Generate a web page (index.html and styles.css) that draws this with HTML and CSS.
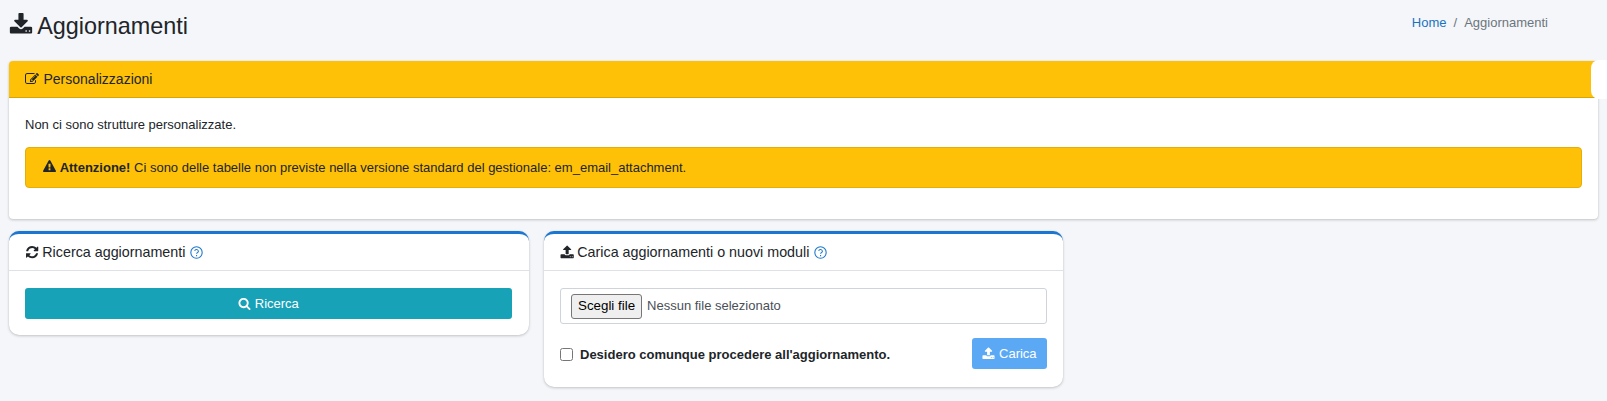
FILE: index.html
```html
<!DOCTYPE html>
<html lang="it">
  <head>
    <meta charset="UTF-8" />
    <meta name="viewport" content="width=device-width, initial-scale=1.0" />
    <title>Aggiornamenti</title>
    <link rel="stylesheet" href="styles.css">
  </head>

  <body>
    <header class="page-head">
      <h1 class="page-title">
        <svg class="icon title-icon" viewBox="0 0 1792 1792"><path d="M1344 1344q0-26-19-45t-45-19-45 19-19 45 19 45 45 19 45-19 19-45zm256 0q0-26-19-45t-45-19-45 19-19 45 19 45 45 19 45-19 19-45zm128-224v320q0 40-28 68t-68 28h-1472q-40 0-68-28t-28-68v-320q0-40 28-68t68-28h465l135 136q58 56 136 56t136-56l136-136h464q40 0 68 28t28 68zm-325-569q17 41-14 70l-448 448q-18 19-45 19t-45-19l-448-448q-31-29-14-70 17-39 59-39h256v-448q0-26 19-45t45-19h256q26 0 45 19t19 45v448h256q42 0 59 39z"/></svg>
        Aggiornamenti
      </h1>
      <nav class="breadcrumb">
        <a href="#">Home</a>
        <span class="crumb-sep">/</span>
        <span>Aggiornamenti</span>
      </nav>
    </header>

    <section class="card card-warning">
      <div class="card-title warning-title">
        <svg class="icon" viewBox="0 0 1792 1792"><path d="M888 1184l116-116-152-152-116 116v56h96v96h56zm440-720q-16-16-33 1l-350 350q-17 17-1 33t33-1l350-350q17-17 1-33zm80 594v190q0 119-84.5 203.5t-203.5 84.5h-832q-119 0-203.5-84.5t-84.5-203.5v-832q0-119 84.5-203.5t203.5-84.5h832q63 0 117 25 15 7 18 23 3 17-9 29l-49 49q-14 14-32 8-23-6-45-6h-832q-66 0-113 47t-47 113v832q0 66 47 113t113 47h832q66 0 113-47t47-113v-126q0-13 9-22l64-64q15-15 35-7t20 29zm-96-738l288 288-672 672h-288v-288zm444 132l-92 92-288-288 92-92q28-28 68-28t68 28l152 152q28 28 28 68t-28 68z"/></svg>
        Personalizzazioni
      </div>
      <div class="card-body">
        <p class="plain-text">Non ci sono strutture personalizzate.</p>
        <div class="alert">
          <svg class="icon" viewBox="0 0 1792 1792"><path d="M1024 1375v-190q0-14-9.5-23.5t-22.5-9.5h-192q-13 0-22.5 9.5t-9.5 23.5v190q0 14 9.5 23.5t22.5 9.5h192q13 0 22.5-9.5t9.5-23.5zm-2-374l18-459q0-12-10-19-13-11-24-11h-220q-11 0-24 11-10 7-10 21l17 457q0 10 10 16.5t24 6.5h185q14 0 23.5-6.5t10.5-16.5zm-14-934l768 1408q35 63-2 126-17 29-46.5 46t-63.5 17h-1536q-34 0-63.5-17t-46.5-46q-37-63-2-126l768-1408q17-31 47-49t65-18 65 18 47 49z"/></svg>
          <b>Attenzione!</b> Ci sono delle tabelle non previste nella versione standard del gestionale: em_email_attachment.
        </div>
      </div>
    </section>
    <div class="side-tab"></div>

    <div class="card-row">
      <section class="card card-primary">
        <div class="card-title">
          <svg class="icon" viewBox="0 0 1792 1792"><path d="M1639 1056q0 5-1 7-64 268-268 434.5t-478 166.5q-146 0-282.5-55t-243.5-157l-129 129q-19 19-45 19t-45-19-19-45v-448q0-26 19-45t45-19h448q26 0 45 19t19 45-19 45l-137 137q71 66 161 102t187 36q134 0 250-65t186-179q11-17 53-117 8-23 30-23h192q13 0 22.5 9.5t9.5 22.5zm25-800v448q0 26-19 45t-45 19h-448q-26 0-45-19t-19-45 19-45l138-138q-148-137-349-137-134 0-250 65t-186 179q-11 17-53 117-8 23-30 23h-199q-13 0-22.5-9.5t-9.5-22.5v-7q65-268 270-434.5t480-166.5q146 0 284 55.5t245 156.5l130-129q19-19 45-19t45 19 19 45z"/></svg>
          Ricerca aggiornamenti
          <svg class="help" viewBox="0 0 24 24"><circle cx="12" cy="12" r="10.5"/><path d="M8.6 9.2a3.5 3.5 0 0 1 6.9.5c0 2.3-3.4 2.6-3.4 4.8"/><path d="M12.1 16.6v2.1"/></svg>
        </div>
        <div class="card-body">
          <button class="btn btn-search" type="button">
            <svg class="icon" viewBox="0 0 1792 1792"><path d="M1216 832q0-185-131.5-316.5t-316.5-131.5-316.5 131.5-131.5 316.5 131.5 316.5 316.5 131.5 316.5-131.5 131.5-316.5zm512 832q0 52-38 90t-90 38q-54 0-90-38l-343-342q-179 124-399 124-143 0-273.5-55.5t-225-150-150-225-55.5-273.5 55.5-273.5 150-225 225-150 273.5-55.5 273.5 55.5 225 150 150 225 55.5 273.5q0 220-124 399l343 343q37 37 37 90z"/></svg>
            Ricerca
          </button>
        </div>
      </section>

      <section class="card card-primary">
        <div class="card-title">
          <svg class="icon" viewBox="0 0 1792 1792"><path d="M1344 1472q0-26-19-45t-45-19-45 19-19 45 19 45 45 19 45-19 19-45zm256 0q0-26-19-45t-45-19-45 19-19 45 19 45 45 19 45-19 19-45zm128-224v320q0 40-28 68t-68 28h-1472q-40 0-68-28t-28-68v-320q0-40 28-68t68-28h427q21 56 70.5 92t110.5 36h256q61 0 110.5-36t70.5-92h427q40 0 68 28t28 68zm-325-648q-17 40-59 40h-256v448q0 26-19 45t-45 19h-256q-26 0-45-19t-19-45v-448h-256q-42 0-59-40-17-39 14-69l448-448q18-19 45-19t45 19l448 448q31 30 14 69z"/></svg>
          Carica aggiornamenti o nuovi moduli
          <svg class="help" viewBox="0 0 24 24"><circle cx="12" cy="12" r="10.5"/><path d="M8.6 9.2a3.5 3.5 0 0 1 6.9.5c0 2.3-3.4 2.6-3.4 4.8"/><path d="M12.1 16.6v2.1"/></svg>
        </div>
        <div class="card-body upload-body">
          <div class="file-box">
            <span class="file-btn">Scegli file</span>
            <span class="file-name">Nessun file selezionato</span>
          </div>
          <div class="upload-row">
            <label class="check-label"><input type="checkbox" /> Desidero comunque procedere all'aggiornamento.</label>
            <button class="btn btn-upload" type="button">
              <svg class="icon" viewBox="0 0 1792 1792"><path d="M1344 1472q0-26-19-45t-45-19-45 19-19 45 19 45 45 19 45-19 19-45zm256 0q0-26-19-45t-45-19-45 19-19 45 19 45 45 19 45-19 19-45zm128-224v320q0 40-28 68t-68 28h-1472q-40 0-68-28t-28-68v-320q0-40 28-68t68-28h427q21 56 70.5 92t110.5 36h256q61 0 110.5-36t70.5-92h427q40 0 68 28t28 68zm-325-648q-17 40-59 40h-256v448q0 26-19 45t-45 19h-256q-26 0-45-19t-19-45v-448h-256q-42 0-59-40-17-39 14-69l448-448q18-19 45-19t45 19l448 448q31 30 14 69z"/></svg>
              Carica
            </button>
          </div>
        </div>
      </section>
    </div>
  </body>
</html>
```

FILE: styles.css
```css
html,
body {
  height: 100%;
}

body {
  margin: 0;
  padding: 0 9px;
  background-color: #f4f6f9;
  color: #212529;
  font-family: "Liberation Sans", Arial, sans-serif;
  font-size: 13px;
  line-height: 20px;
  overflow: hidden;
  box-sizing: border-box;
}

.icon {
  width: 1em;
  height: 1em;
  fill: currentColor;
  vertical-align: -0.12em;
}

.page-head {
  height: 61px;
  display: flex;
  justify-content: space-between;
  align-items: center;
  padding-bottom: 9px;
  box-sizing: border-box;
}

.page-title {
  margin: 0;
  font-size: 23.4px;
  font-weight: 400;
  line-height: 30px;
  word-spacing: -1px;
}

.title-icon {
  width: 24px;
  height: 24px;
  vertical-align: -3px;
}

.breadcrumb {
  display: flex;
  gap: 7px;
  margin-right: 50px;
  margin-bottom: 6px;
  color: #6c757d;
  font-size: 13px;
}

.breadcrumb a {
  color: #1a73c0;
  text-decoration: none;
}

.card {
  background-color: #fff;
  border-radius: 4px;
  box-shadow: 0 0 1px rgba(0, 0, 0, 0.13), 0 1px 3px rgba(0, 0, 0, 0.2);
}

.card-warning {
  height: 158px;
}

.card-primary {
  border-top: 3px solid #1b76d2;
  border-radius: 10px;
}

.card-title {
  height: 36px;
  padding: 0 16px;
  display: flex;
  align-items: center;
  gap: 3px;
  border-bottom: 1px solid #dee2e6;
  font-size: 14.3px;
}

.warning-title {
  gap: 4.5px;
  background-color: #ffc107;
  border-bottom: 1px solid #d9a406;
  border-radius: 4px 4px 0 0;
  font-size: 14px;
}

.card-body {
  padding: 17px 17px 16px 16px;
}

.upload-body {
  padding-right: 16px;
}

.plain-text {
  margin: 0 0 12px;
}

.alert {
  padding: 9.5px 17px;
  margin-right: -1px;
  background-color: #ffc107;
  border: 1px solid #e6ad06;
  border-radius: 4px;
}

.side-tab {
  position: absolute;
  top: 60px;
  right: 0;
  width: 16px;
  height: 39px;
  background-color: #fff;
  border-radius: 8px 0 0 8px;
}

.card-row {
  display: grid;
  grid-template-columns: 520px 519px;
  gap: 15px;
  align-items: start;
  margin-top: 12px;
}

.help {
  width: 13px;
  height: 13px;
  margin-left: 2px;
  fill: none;
  stroke: #1f7ac9;
  stroke-width: 2;
}

.btn {
  height: 31px;
  border: 0;
  border-radius: 3px;
  color: #fff;
  font-family: inherit;
  font-size: 13px;
}

.btn-search {
  display: block;
  width: 100%;
  background-color: #17a2b8;
}

.btn-upload {
  width: 75px;
  background-color: #5ba9f5;
}

.file-box {
  height: 36px;
  padding: 0 10px;
  display: flex;
  align-items: center;
  gap: 5px;
  border: 1px solid #ced4da;
  border-radius: 3px;
  box-sizing: border-box;
  color: #495057;
}

.file-btn {
  height: 25px;
  padding: 0 6px;
  display: flex;
  align-items: center;
  background-color: #efefef;
  border: 1px solid #767676;
  border-radius: 3px;
  box-sizing: border-box;
  color: #000;
  font-size: 13.33px;
}

.upload-row {
  margin-top: 14px;
  margin-bottom: 2px;
  display: flex;
  justify-content: space-between;
  align-items: center;
}

.check-label {
  display: flex;
  align-items: center;
  gap: 7px;
  font-weight: 700;
  padding-top: 2px;
}

.check-label input {
  width: 13px;
  height: 13px;
  margin: 0;
}
```
